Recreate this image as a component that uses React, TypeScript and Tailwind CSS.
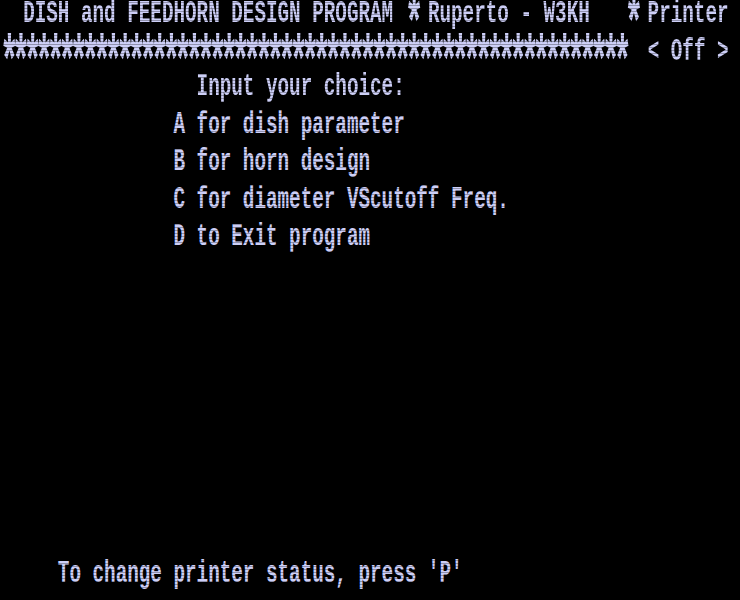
import React from "react"

const rows = [
  "  DISH and FEEDHORN DESIGN PROGRAM * Ruperto - W3KH   * Printer",
  "*".repeat(54) + "  < Off >",
  " ".repeat(17) + "Input your choice:",
  " ".repeat(15) + "A for dish parameter",
  " ".repeat(15) + "B for horn design",
  " ".repeat(15) + "C for diameter VScutoff Freq.",
  " ".repeat(15) + "D to Exit program",
  "",
  "",
  "",
  "",
  "",
  "",
  "",
  "",
  "     To change printer status, press 'P'",
]

// big centered stars, same cell width as the other characters
function Stars({ text }: { text: string }) {
  return (
    <span className="inline-block text-[52px] tracking-[-12px] translate-y-[16px] scale-y-[1.35] origin-[50%_30%] leading-none">
      {text}
    </span>
  )
}

function Row({ text, className = "" }: { text: string; className?: string }) {
  const parts = text.split(/(\*+)/)
  return (
    <div className={"h-[37.5px] shrink-0 leading-[37.5px] whitespace-pre origin-left scale-x-[0.6022] " + className}>
      {parts.map((p, i) =>
        p.startsWith("*") ? <Stars key={i} text={p} /> : <span key={i}>{p}</span>
      )}
    </div>
  )
}

export default function App() {
  return (
    <div className="relative w-[740px] h-[600px] bg-black overflow-hidden font-['Liberation_Mono',monospace] font-bold text-[32px] text-[#cdcff7]">
      <div className="flex flex-col -mt-[13px]">
        {rows.map((r, i) => (
          <Row key={i} text={r} className={i === 0 ? "-mt-[4px]" : i === 1 ? "mb-[10px]" : i === 15 ? "-mt-[1px]" : ""} />
        ))}
      </div>
      <div className="absolute inset-0 pointer-events-none bg-[repeating-linear-gradient(to_bottom,transparent_0px,transparent_2px,rgba(0,0,0,0.3)_2px,rgba(0,0,0,0.3)_3px)]" />
    </div>
  )
}
